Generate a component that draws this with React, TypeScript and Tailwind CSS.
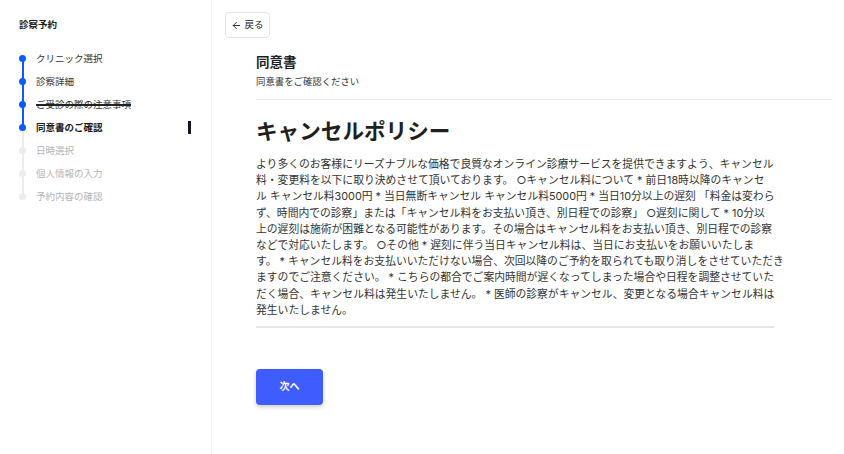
import { ArrowLeft } from "lucide-react";

const steps = [
  { label: "クリニック選択", state: "done" },
  { label: "診察詳細", state: "done" },
  { label: "ご受診の際の注意事項", state: "done", strike: true },
  { label: "同意書のご確認", state: "active" },
  { label: "日時選択", state: "todo" },
  { label: "個人情報の入力", state: "todo" },
  { label: "予約内容の確認", state: "todo" },
];

// wrapped as in the design
const policyLines = [
  "より多くのお客様にリーズナブルな価格で良質なオンライン診療サービスを提供できますよう、キャンセル",
  "料・変更料を以下に取り決めさせて頂いております。 ○キャンセル料について * 前日18時以降のキャンセ",
  "ル キャンセル料3000円 * 当日無断キャンセル キャンセル料5000円 * 当日10分以上の遅刻 「料金は変わら",
  "ず、時間内での診察」または「キャンセル料をお支払い頂き、別日程での診察」 ○遅刻に関して * 10分以",
  "上の遅刻は施術が困難となる可能性があります。その場合はキャンセル料をお支払い頂き、別日程での診察",
  "などで対応いたします。 ○その他 * 遅刻に伴う当日キャンセル料は、当日にお支払いをお願いいたしま",
  "す。 * キャンセル料をお支払いいただけない場合、次回以降のご予約を取られても取り消しをさせていただき",
  "ますのでご注意ください。 * こちらの都合でご案内時間が遅くなってしまった場合や日程を調整させていた",
  "だく場合、キャンセル料は発生いたしません。 * 医師の診察がキャンセル、変更となる場合キャンセル料は",
  "発生いたしません。",
];

function Sidebar() {
  return (
    <aside className="w-[212px] shrink-0 border-r border-[#efeff1] pt-[18px]">
      <p className="pl-[19px] text-[9.5px] leading-[14px] font-semibold text-[#222]">
        診察予約
      </p>
      <ul className="mt-[15px]">
        {steps.map((s, i) => {
          const reached = s.state !== "todo";
          const topColor =
            i === 0 ? "" : reached ? "bg-[#0b5cff]" : "bg-[#ececef]";
          const bottomColor =
            i === steps.length - 1
              ? ""
              : i < 3
                ? "bg-[#0b5cff]"
                : "bg-[#ececef]";
          return (
            <li
              key={s.label}
              className="flex h-[23px] items-center pl-[19px] pr-[20px]"
            >
              {/* step marker + connector */}
              <div className="relative flex h-full w-[7px] items-center justify-center">
                <span
                  className={`absolute top-0 left-[3px] h-1/2 w-[1.5px] ${topColor}`}
                />
                <span
                  className={`absolute bottom-0 left-[3px] h-1/2 w-[1.5px] ${bottomColor}`}
                />
                <span
                  className={`relative h-[7px] w-[7px] rounded-full ${
                    reached ? "bg-[#0b5cff]" : "bg-[#ececef]"
                  }`}
                />
              </div>
              <span
                className={`ml-[10px] flex-1 text-[9.5px] leading-[14px] ${
                  s.state === "active"
                    ? "font-bold text-[#1a1a1a]"
                    : s.state === "done"
                      ? "text-[#333]"
                      : "text-[#b4b4b8]"
                } ${s.strike ? "line-through decoration-[#222] decoration-[1.5px]" : ""}`}
              >
                {s.label}
              </span>
              {s.state === "active" && (
                <span className="h-[13px] w-[3px] bg-[#101828]" />
              )}
            </li>
          );
        })}
      </ul>
    </aside>
  );
}

export default function App() {
  return (
    <div className="flex min-h-screen bg-white font-['Inter','Noto_Sans_CJK_JP',sans-serif] text-[#222]">
      <Sidebar />

      <main className="flex-1 pt-[12px] pl-[13px] pr-[12px]">
        <button className="flex h-[26px] w-[45px] items-center justify-center gap-[2px] rounded-[4px] border border-[#e4e4e7] bg-white text-[9.5px] text-[#222]">
          <ArrowLeft className="h-[11px] w-[11px]" strokeWidth={2} />
          戻る
        </button>

        <div className="ml-[31px]">
          {/* Header */}
          <div className="mt-[14px] border-b-[1.5px] border-[#e6e6ea] pb-[10px]">
            <h2 className="text-[13.5px] leading-[20px] font-bold text-[#1f1f1f]">
              同意書
            </h2>
            <p className="mt-[3px] text-[9.4px] leading-[14px] text-[#333]">
              同意書をご確認ください
            </p>
          </div>

          {/* Policy */}
          <div className="w-[518px]">
            <h1 className="mt-[16px] text-[21.6px] leading-[30px] font-bold text-[#1f1f1f]">
              キャンセルポリシー
            </h1>
            <p className="mt-[11px] w-[540px] text-[10.8px] leading-[16.2px] whitespace-nowrap text-[#333]">
              {policyLines.map((line) => (
                <span key={line} className="block">
                  {line}
                </span>
              ))}
            </p>
            <div className="mt-[7px] h-[1.5px] bg-[#e6e6ea]" />

            <button className="mt-[41px] h-[36px] w-[67px] rounded-[4px] bg-[#3f5cff] text-[10px] font-bold text-white shadow-[0_2px_4px_rgba(0,0,0,0.2)]">
              次へ
            </button>
          </div>
        </div>
      </main>
    </div>
  );
}
